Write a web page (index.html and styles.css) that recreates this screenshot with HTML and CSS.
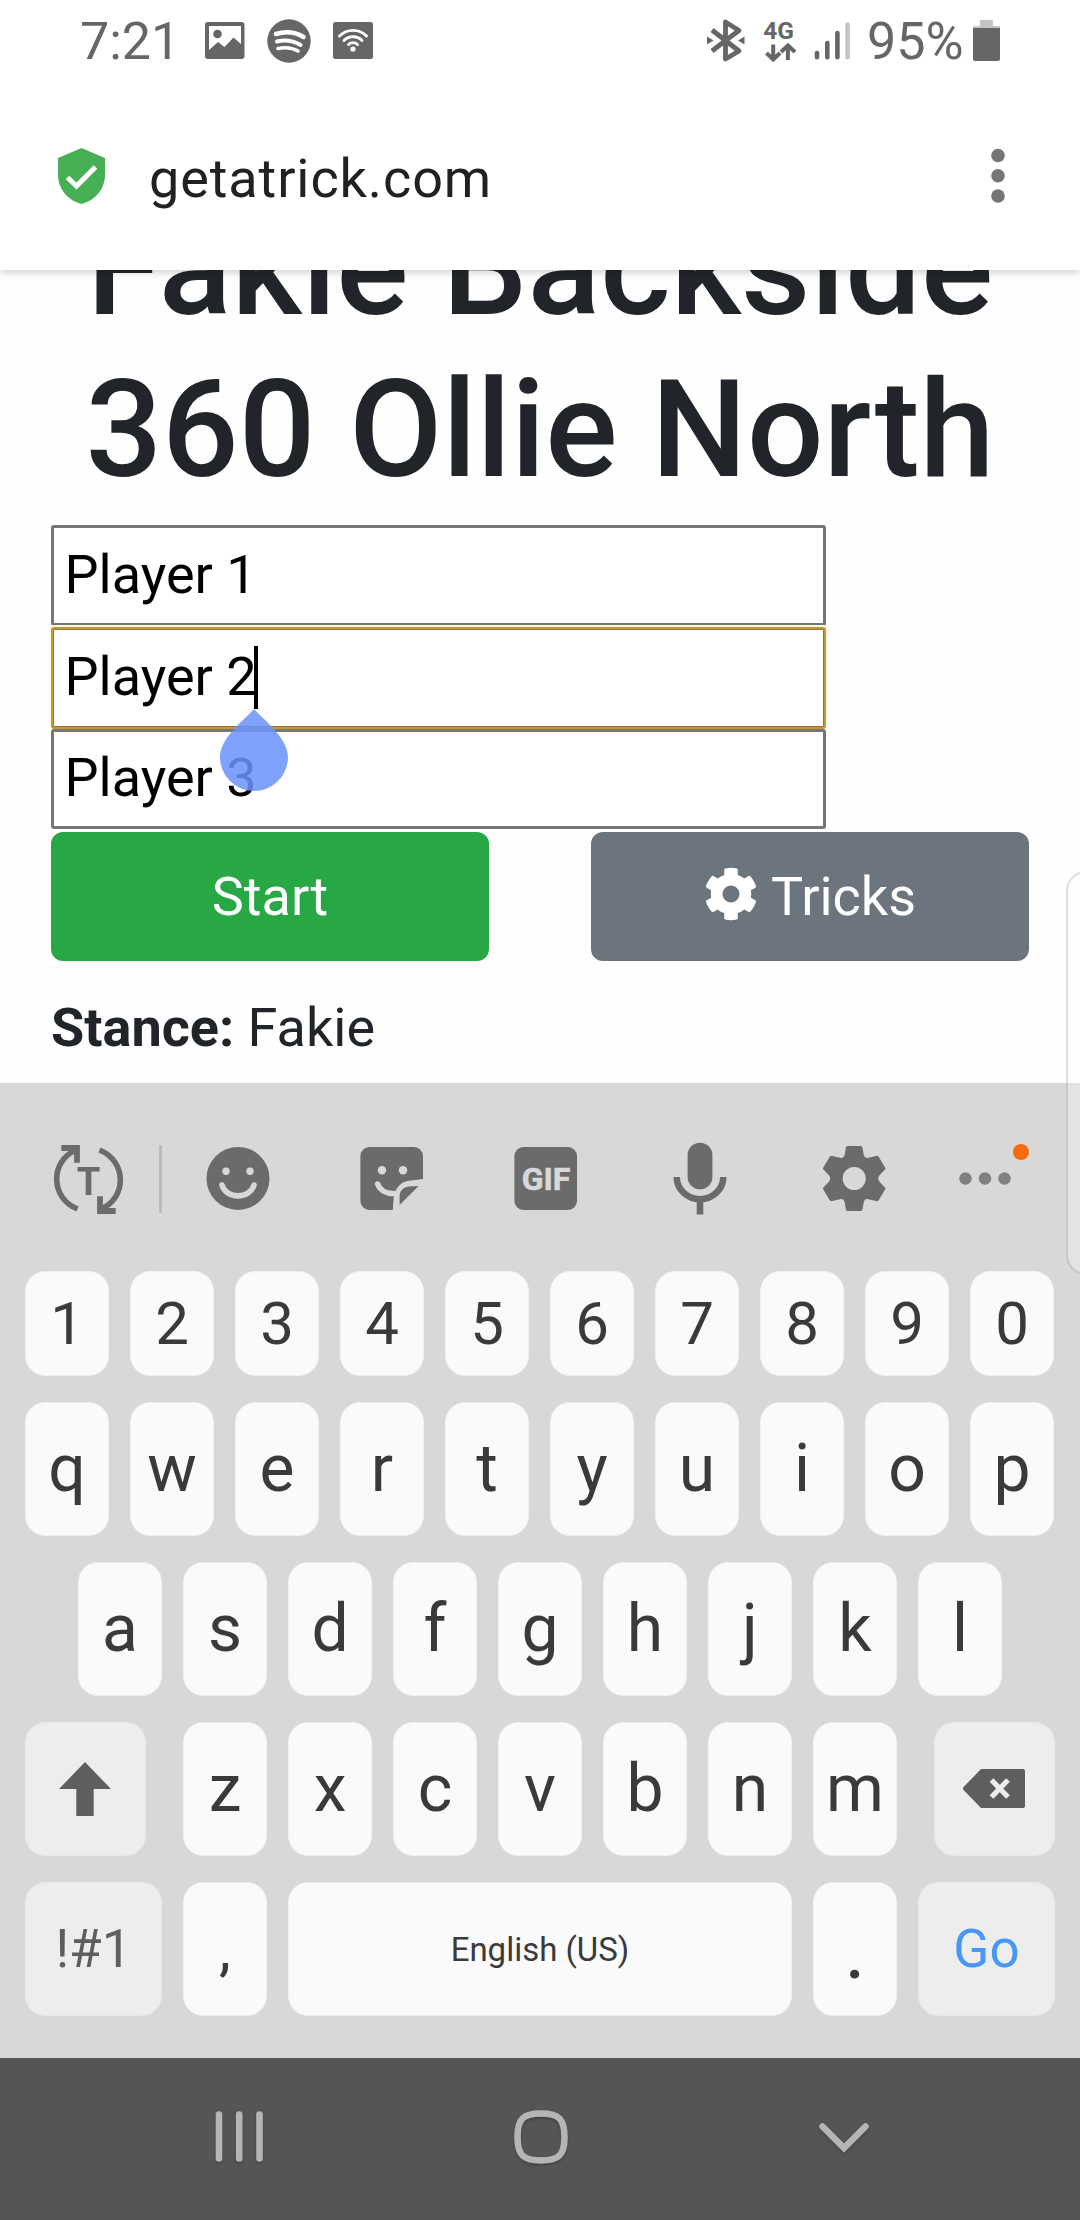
FILE: index.html
```html
<!DOCTYPE html>
<html lang="en">
<head>
<meta charset="utf-8">
<title>getatrick.com</title>
<link rel="stylesheet" href="styles.css">
</head>
<body>
<div class="screen">
  <header class="chrome">
    <div class="status">
      <span class="clock">7:21</span>
      <svg class="st-image" width="40" height="38" viewBox="0 0 40 38"><path fill="#666" fill-rule="evenodd" d="M3 0H36.500a3 3 0 0 1 3 3V34a3 3 0 0 1-3 3H3a3 3 0 0 1-3-3V3a3 3 0 0 1 3-3zM4 4V28L13 20 19.500 25 28.500 15.500 36 22V4z"/><circle cx="12.500" cy="12" r="4.300" fill="#666"/></svg>
      <svg class="st-music" width="44" height="44" viewBox="0 0 44 44"><circle cx="22" cy="22" r="21.700" fill="#666"/><g fill="none" stroke="#fff" stroke-linecap="round"><path stroke-width="4.500" d="M9 15C19 12 29 13.500 36.500 18"/><path stroke-width="4" d="M10 22.500C18 20.500 26 21.500 33.500 26"/><path stroke-width="3.600" d="M11 29.500C18 28 25 28.500 31 32"/></g></svg>
      <svg class="st-wifi" width="40" height="38" viewBox="0 0 40 38"><rect width="40" height="37" rx="2.500" fill="#666"/><g fill="none" stroke="#fff" stroke-width="2.900" stroke-linecap="round"><path d="M6.500 14C14 6.500 26 6.500 33.500 14"/><path d="M11 18.500C16 13.500 24 13.500 29 18.500"/><path d="M15.500 22.500C18 20 22 20 24.500 22.500"/></g><circle cx="20" cy="27" r="2.600" fill="#fff"/></svg>
      <span class="spacer"></span>
      <svg class="st-bt" width="38" height="43" viewBox="0 0 38 43"><path d="M5 11 18.500 21.500 32 32 18.500 40V3L32 11.500 18.500 21.500 5 32" fill="none" stroke="#666" stroke-width="4.800" stroke-linejoin="round"/><path d="M0 17.500 6.500 21.500 0 25.500zM37.500 17.500 31 21.500 37.500 25.500z" fill="#666"/></svg>
      <svg class="st-data" width="32" height="44" viewBox="0 0 32 44"><text x="-.8" y="19.500" class="net">4G</text><path d="M9.200 25.500V38M2.500 34 9.200 40.500 16 34M23.900 41V28M17 33 23.900 26.500 31 33" fill="none" stroke="#666" stroke-width="4"/></svg>
      <svg class="st-signal" width="37" height="38" viewBox="0 0 37 38"><path d="M3 31V35.200M13.300 21V35.200M23.400 11V35.200" stroke="#666" stroke-width="4.600" stroke-linecap="round"/><path d="M33.600 2.500V35.200" stroke="#c4c4c4" stroke-width="4.600" stroke-linecap="round"/></svg>
      <span class="percent">95%</span>
      <svg class="st-battery" width="27" height="41" viewBox="0 0 27 41"><path d="M8 0H19a1 1 0 0 1 1 1V6h6a1 1 0 0 1 1 1V9H0V7a1 1 0 0 1 1-1H7V1a1 1 0 0 1 1-1z" fill="#c4c4c4"/><path d="M0 8H27V39a2 2 0 0 1-2 2H2a2 2 0 0 1-2-2z" fill="#666"/></svg>
    </div>
    <div class="address">
      <svg class="shield" width="47" height="56" viewBox="0 0 47 56"><path d="M23.500 0 47 10V27C47 41 37 52.500 23.500 56 10 52.500 0 41 0 27V10z" fill="#47b055"/><path d="M9.500 29.500 18.500 38 37.500 19" fill="none" stroke="#fff" stroke-width="5"/></svg>
      <span class="url">getatrick.com</span>
      <svg class="more" width="14" height="56" viewBox="0 0 14 56" fill="#757575"><circle cx="7" cy="7.500" r="6.800"/><circle cx="7" cy="27.700" r="6.800"/><circle cx="7" cy="48" r="6.800"/></svg>
    </div>
  </header>

  <main class="page">
    <h1 class="trick">Fakie Backside<br>360 Ollie North</h1>
    <div class="players">
      <div class="player">Player 1</div>
      <div class="player focused">Player 2<span class="caret"></span>
        <svg class="handle" width="68" height="82" viewBox="0 0 68 82"><path d="M34 0C44 11 68 29 68 48A34 34 0 0 1 0 48C0 29 24 11 34 0z" fill="rgb(106,147,255)" fill-opacity=".86"/></svg>
      </div>
      <div class="player last">Player 3</div>
    </div>
    <div class="actions">
      <div class="btn start">Start</div>
      <div class="btn tricks"><svg width="54" height="54" viewBox="0 0 512 512"><path fill="#fff" d="M487.4 315.7l-42.600-24.600c4.300-23.200 4.300-47 0-70.200l42.600-24.600c4.900-2.800 7.100-8.600 5.500-14-11.100-35.600-30-67.800-54.700-94.600-3.800-4.100-10-5.100-14.800-2.300L380.800 110c-17.900-15.400-38.500-27.300-60.800-35.100V25.800c0-5.600-3.900-10.500-9.400-11.700-36.700-8.200-74.300-7.800-109.200 0-5.500 1.200-9.400 6.100-9.400 11.700V75c-22.200 7.900-42.800 19.800-60.800 35.100L88.700 85.500c-4.900-2.800-11-1.900-14.800 2.300-24.700 26.700-43.600 58.900-54.700 94.600-1.700 5.400.6 11.200 5.500 14L67.300 221c-4.300 23.200-4.300 47 0 70.200l-42.600 24.600c-4.900 2.800-7.100 8.600-5.500 14 11.100 35.600 30 67.800 54.700 94.600 3.800 4.100 10 5.100 14.800 2.300l42.600-24.600c17.900 15.400 38.500 27.300 60.800 35.100v49.200c0 5.600 3.900 10.500 9.400 11.700 36.700 8.200 74.300 7.800 109.200 0 5.500-1.200 9.400-6.100 9.400-11.700v-49.200c22.200-7.900 42.800-19.800 60.800-35.100l42.600 24.600c4.900 2.800 11 1.900 14.800-2.300 24.700-26.700 43.600-58.900 54.700-94.600 1.500-5.500-.7-11.300-5.600-14.100zM256 336c-44.100 0-80-35.900-80-80s35.900-80 80-80 80 35.900 80 80-35.900 80-80 80z"/></svg><span>Tricks</span></div>
    </div>
    <p class="stance"><b>Stance:</b> Fakie</p>
  </main>

  <section class="keyboard">
    <div class="tools">
      <svg class="tool" width="72" height="72" viewBox="0 0 72 72"><g id="turn" fill="none" stroke="#6b6b6b"><path stroke-width="5.600" d="M25.500 66C-2 55-2 18 24 7"/><path stroke-width="5.800" d="M9.300 5H25V19.700"/></g><use href="#turn" transform="rotate(180 36.500 36.500)"/><text x="36.600" y="52" class="tee">T</text></svg>
      <span class="divider"></span>
      <svg class="tool" width="72" height="72" viewBox="0 0 72 72"><circle cx="36" cy="35.400" r="31.500" fill="#6b6b6b"/><g fill="#d8d8d8"><circle cx="24" cy="28.300" r="3.700"/><circle cx="48" cy="28.300" r="3.700"/></g><path d="M20 42C24 56.500 48 56.500 52 42" fill="none" stroke="#d8d8d8" stroke-width="5.600" stroke-linecap="round"/></svg>
      <svg class="tool" width="72" height="72" viewBox="0 0 72 72"><path fill="#6b6b6b" d="M13.400 4H58a9 9 0 0 1 9 9V36L53 37.700C46 38.500 42 43 39.500 48L37.800 53 36.800 67H13.400a9 9 0 0 1-9-9V13a9 9 0 0 1 9-9zM62.600 43 43.600 62V52C44.500 47 48 43.700 53.300 43.500z"/><g fill="#d8d8d8"><circle cx="26" cy="27.300" r="4.200"/><circle cx="47" cy="27.300" r="4.200"/></g><path d="M21.600 41C24 47 30 51 38 50.500" fill="none" stroke="#d8d8d8" stroke-width="5.500" stroke-linecap="round"/></svg>
      <svg class="tool" width="72" height="72" viewBox="0 0 72 72"><rect x="4.400" y="4" width="62.600" height="63" rx="9" fill="#6b6b6b"/><text x="36" y="47" class="gif">GIF</text></svg>
      <svg class="tool" width="72" height="72" viewBox="0 0 72 72"><rect x="23.600" y="-.3" width="24.800" height="46.600" rx="12.400" fill="#6b6b6b"/><path d="M12.700 34A23.300 22.200 0 0 0 59.300 34M36 56.500V71.500" fill="none" stroke="#6b6b6b" stroke-width="6.600"/></svg>
      <svg class="tool" width="72" height="72" viewBox="0 0 72 72"><path fill="#6b6b6b" fill-rule="evenodd" d="M29.500 3H43L44.300 4 45.900 12.500Q46.800 15.600 50.500 14.800L59 12.800 60.500 13.500 67.400 25V26L61.500 32.300Q59 35.500 61.500 38.700L67.400 45V46L60.500 57.500 59 58.200 50.500 56.200Q46.800 55.400 45.900 58.500L44.300 67 43 68H29.400L28 67 26.500 58.500Q25.600 55.400 21.900 56.200L13.400 58.200 11.900 57.500 5 46V45L10.900 38.700Q13.400 35.500 10.900 32.300L5 26V25L11.900 13.500 13.400 12.800 21.900 14.800Q25.600 15.600 26.500 12.500L28 4zM36.200 24a11.400 11.400 0 1 0 0 23 11.400 11.400 0 1 0 0-23z"/></svg>
      <span class="overflow"><svg width="52" height="72" viewBox="0 0 52 72" fill="#808080"><circle cx="6.500" cy="35.500" r="6.200"/><circle cx="26" cy="35.500" r="6.200"/><circle cx="45.500" cy="35.500" r="6.200"/></svg><i class="badge"></i></span>
    </div>
    <div class="row digits"><span class="key">1</span><span class="key">2</span><span class="key">3</span><span class="key">4</span><span class="key">5</span><span class="key">6</span><span class="key">7</span><span class="key">8</span><span class="key">9</span><span class="key">0</span></div>
    <div class="row"><span class="key">q</span><span class="key">w</span><span class="key">e</span><span class="key">r</span><span class="key">t</span><span class="key">y</span><span class="key">u</span><span class="key">i</span><span class="key">o</span><span class="key">p</span></div>
    <div class="row home"><span class="key">a</span><span class="key">s</span><span class="key">d</span><span class="key">f</span><span class="key">g</span><span class="key">h</span><span class="key">j</span><span class="key">k</span><span class="key">l</span></div>
    <div class="row">
      <span class="key fn shift"><svg width="52" height="54" viewBox="0 0 52 54"><path d="M26 0 52 27H34.700V54H17.300V27H0z" fill="#5e5e5e"/></svg></span>
      <span class="key">z</span><span class="key">x</span><span class="key">c</span><span class="key">v</span><span class="key">b</span><span class="key">n</span><span class="key">m</span>
      <span class="key fn del"><svg width="62" height="39" viewBox="0 0 62 39"><path d="M18 0H60a2 2 0 0 1 2 2V37a2 2 0 0 1-2 2H18L.8 21.200a2.500 2.500 0 0 1 0-3.400z" fill="#5e5e5e"/><path d="M28.500 11 45 28M45 11 28.500 28" stroke="#ededed" stroke-width="5.200"/></svg></span>
    </div>
    <div class="row">
      <span class="key fn sym">!#1</span><span class="key comma">,</span><span class="key space">English (US)</span><span class="key dot">.</span><span class="key fn go">Go</span>
    </div>
  </section>

  <nav class="navbar">
    <svg width="50" height="56" viewBox="0 0 50 56"><path d="M5 5.500V49.500M25.200 5.500V49.500M45.500 5.500V49.500" stroke="#b5b5b5" stroke-width="6.600" stroke-linecap="round"/></svg>
    <svg width="56" height="56" viewBox="0 0 56 56"><path d="M28 4.500C46 4.500 51.500 10 51.500 28S46 51.500 28 51.500 4.500 46 4.500 28 10 4.500 28 4.500z" fill="none" stroke="#b5b5b5" stroke-width="6.600"/></svg>
    <svg width="52" height="56" viewBox="0 0 52 56"><path d="M4.500 17.500 26 39 47.500 17.500" fill="none" stroke="#b5b5b5" stroke-width="6.600" stroke-linecap="round"/></svg>
  </nav>
  <div class="edge-panel"></div>
</div>
</body>
</html>
```
FILE: styles.css
```css
* { box-sizing: border-box; }
body { margin: 0; background: #fff; font-family: Roboto, "Liberation Sans", sans-serif; }
svg { display: block; flex: none; overflow: visible; }

.screen {
  position: relative;
  width: 1080px;
  height: 2220px;
  overflow: hidden;
  display: flex;
  flex-direction: column;
  background: #fefefe;
}

/* Status bar and address bar */
.chrome {
  position: relative;
  z-index: 1;
  height: 270px;
  flex: none;
  background: #fff;
  box-shadow: 0 2px 8px rgba(0, 0, 0, .2);
}
.status {
  height: 81px;
  display: flex;
  align-items: center;
  padding: 0 80px;
  color: #666;
  font-size: 52px;
  line-height: 60px;
}
.clock { width: 125px; padding-top: 3px; }
.st-music { margin-left: 22px; }
.st-wifi { margin-left: 22px; }
.spacer { flex: 1; }
.st-data { margin-left: 19px; }
.net { font: 700 24.500px Roboto, sans-serif; fill: #666; }
.st-signal { margin-left: 18px; }
.percent { width: 122px; padding: 3px 0 0 16px; }
.address { height: 189px; display: flex; align-items: center; padding: 0 75px 0 58px; }
.url { flex: 1; margin-left: 44px; padding-top: 6px; font-size: 54px; line-height: 64px; letter-spacing: .9px; color: #212121; }

/* Page content */
.page { height: 813px; flex: none; overflow: hidden; padding: 0 51px; color: #212529; }
.trick { margin: -83px -40px 14px; font-size: 135px; font-weight: 500; line-height: 162px; text-align: center; white-space: nowrap; }
.players { width: 775px; height: 307px; display: grid; grid-template-rows: 102px 102px 103px; }
.player {
  height: 101px;
  border: 3px solid #767676;
  border-radius: 3px;
  padding: 0 0 2px 10.500px;
  background: #fff;
  color: #000;
  font-size: 54px;
  line-height: 93px;
}
.focused {
  position: relative;
  z-index: 1;
  height: 102px;
  border: 2px solid #cb962f;
  padding: 1px 0 0 11.500px;
  box-shadow: 0 -1px 0 1px #fffae0, inset 0 0 0 1px #8a7450;
}
.last { height: 100px; line-height: 92px; }
.caret { position: absolute; left: 201px; top: 17px; width: 4px; height: 63px; background: #000; }
.handle { position: absolute; left: 167px; top: 80px; }
.actions { display: flex; justify-content: space-between; }
.btn {
  width: 438px;
  height: 129px;
  border-radius: 12px;
  display: flex;
  align-items: center;
  justify-content: center;
  gap: 13px;
  color: #fff;
  font-size: 54px;
  line-height: 81px;
}
.start { background: #28a745; }
.tricks { background: #6c757d; }
.tricks svg { margin-top: -5px; }
.stance { margin: 26px 0 0; font-size: 54px; line-height: 81px; }

/* Keyboard */
.keyboard {
  height: 975px;
  flex: none;
  background: #d8d8d8;
  padding: 60px 25px 0;
  display: flex;
  flex-direction: column;
  gap: 26px;
  color: #3a3a3a;
  font-size: 66px;
}
.tools { height: 102px; display: flex; align-items: flex-start; padding-left: 27px; gap: 82px; }
.divider { width: 3px; height: 68px; margin: 2px -43px 0 -47px; background: #bbb; }
.divider + .tool { margin-left: 1px; }
.tee { font: 700 38px Roboto, sans-serif; fill: #6b6b6b; text-anchor: middle; }
.gif { font: 700 32px Roboto, sans-serif; fill: #d8d8d8; stroke: #d8d8d8; stroke-width: .6px; text-anchor: middle; }
.overflow { position: relative; margin-left: -13px; }
.badge { position: absolute; left: 54px; top: 1px; width: 16px; height: 16px; border-radius: 50%; background: #f56b0e; }
.row { display: flex; gap: 21px; height: 134px; flex: none; }
.digits { height: 105px; font-size: 60px; }
.home { padding-left: 53px; }
.key {
  width: 84px;
  flex: none;
  border: 1px solid #f1f1f1;
  border-radius: 20px;
  background: #fafafa;
  display: flex;
  align-items: center;
  justify-content: center;
  line-height: 1;
}
.fn { background: #ededed; border-color: #e8e8e8; color: #5e5e5e; font-size: 53px; }
.shift { width: 121px; margin-right: 16px; padding: 0 1px 1px 0; }
.del { width: 121px; margin-left: 16px; padding: 0 1px 1px 0; }
.sym, .go { width: 137px; }
.go { color: #4797f7; }
.comma { font-size: 60px; }
.dot { font-weight: 500; padding-top: 14px; }
.space { width: 504px; font-size: 33px; }

/* Navigation bar */
.navbar {
  height: 162px;
  flex: none;
  background: #555;
  display: flex;
  align-items: flex-start;
  justify-content: space-between;
  padding: 51px 210px 0 214px;
}
.navbar svg { filter: drop-shadow(0 2px 1px rgba(0, 0, 0, .2)); }

.edge-panel {
  position: absolute;
  z-index: 2;
  left: 1066px;
  top: 871px;
  width: 40px;
  height: 404px;
  border: 2px solid rgba(0, 0, 0, .12);
  border-radius: 20px;
  background: rgba(255, 255, 255, .28);
}
```
